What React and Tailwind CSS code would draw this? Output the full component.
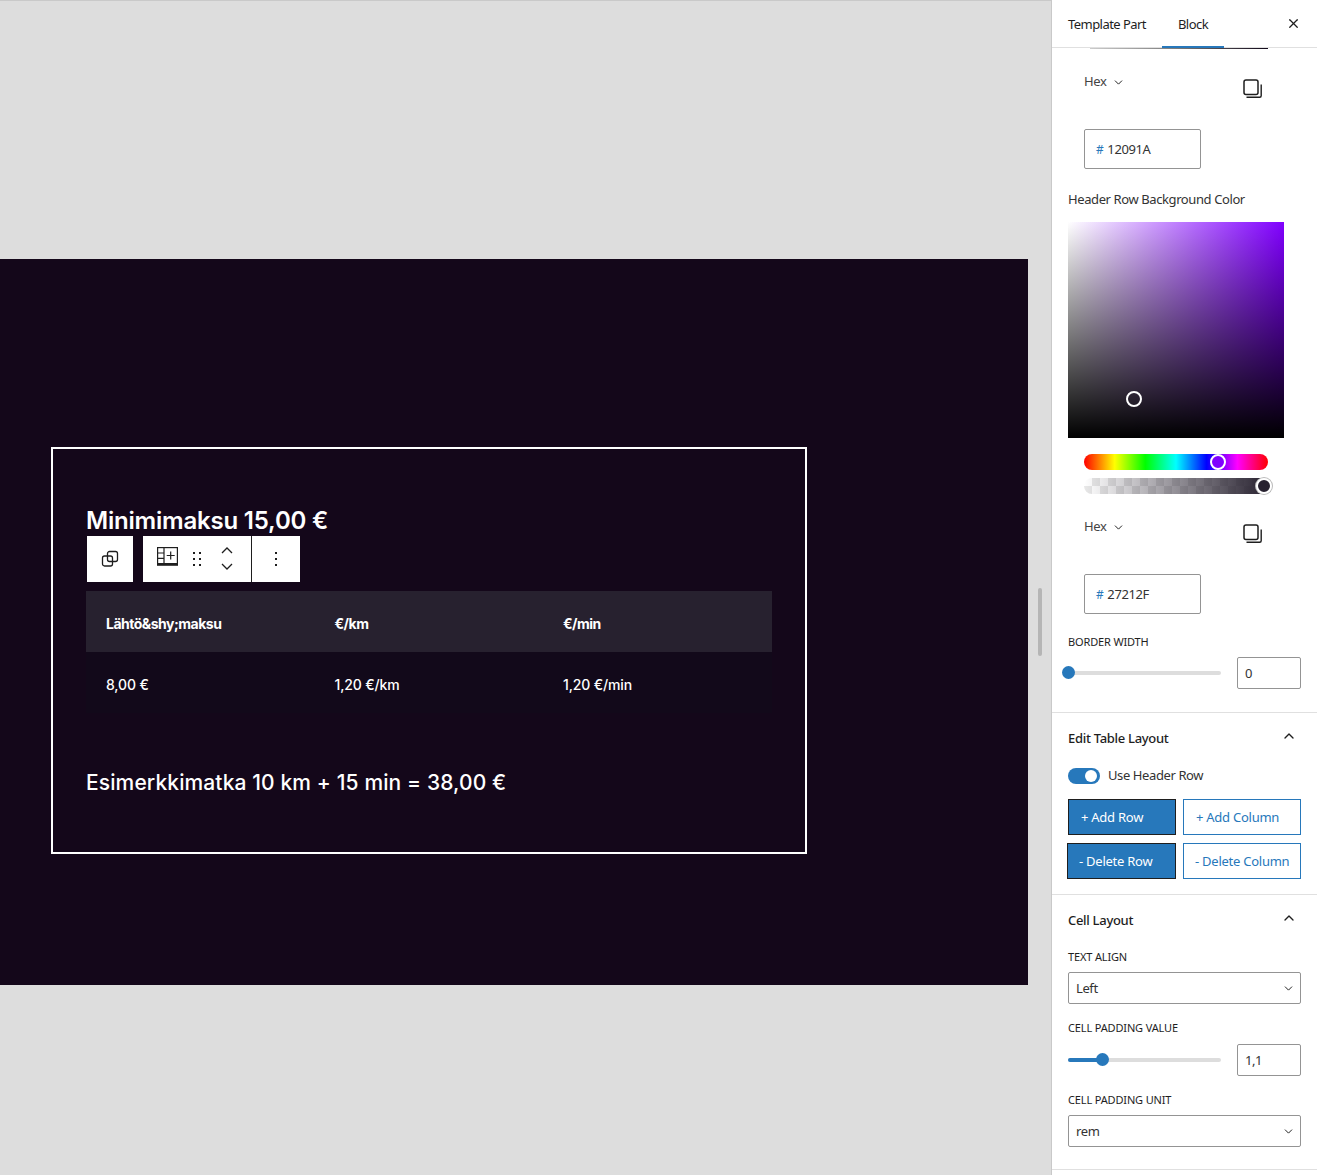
import { ChevronDown, ChevronUp, X } from "lucide-react";

const rows = [
  ["Lähtö&shy;maksu", "€/km", "€/min"],
  ["8,00 €", "1,20 €/km", "1,20 €/min"],
];

function CopyIcon() {
  return (
    <svg width="20" height="20" viewBox="0 0 20 20" fill="none" stroke="#1e1e1e" className="block">
      <rect x="1" y="1" width="14" height="14.5" rx="2" strokeWidth="1.5" />
      <path d="M3.5 18.2h13.2a1.5 1.5 0 0 0 1.5-1.5V5.5" strokeWidth="1.4" />
    </svg>
  );
}

function HexRow({ value, top, textPad }) {
  return (
    <div className={top}>
      <div className="flex justify-between pl-8 pr-[54px]">
        <div className="flex items-center gap-[6px] h-[20px] text-[13px] text-[#444]">
          Hex <ChevronDown size={13} strokeWidth={1.8} color="#1e1e1e" />
        </div>
        <div className="mt-[7px]">
          <CopyIcon />
        </div>
      </div>
      <div className={`ml-8 mt-[30px] w-[117px] h-[40px] border border-[#949494] rounded-[2px] flex items-center pl-[11px] text-[13px] text-[#333] ${textPad}`}>
        <span className="text-[#2778bb] text-[12px] mr-[4px]">#</span>
        {value}
      </div>
    </div>
  );
}

function Slider({ fill, thumb }) {
  return (
    <div className="flex items-center justify-between">
      <div className="relative w-[153px] h-[4px] rounded-full bg-[#ddd]">
        <div className={`h-full rounded-full bg-[#2778bb] ${fill}`} />
        <div className={`absolute top-[-5px] w-[13px] h-[13px] rounded-full bg-[#2778bb] ${thumb}`} />
      </div>
    </div>
  );
}

function NumberRow({ fill, thumb, value }) {
  return (
    <div className="flex items-center justify-between">
      <Slider fill={fill} thumb={thumb} />
      <div className="w-[64px] h-[32px] pt-[1px] border border-[#949494] rounded-[2px] flex items-center pl-[7px] text-[13px] text-[#333]">
        {value}
      </div>
    </div>
  );
}

function Label({ children, className = "" }) {
  return (
    <div className={`text-[11px] leading-[16px] uppercase tracking-[-0.15px] text-[#1e1e1e] ${className}`}>
      {children}
    </div>
  );
}

function SelectBox({ value }) {
  return (
    <div className="h-[32px] border border-[#949494] rounded-[2px] flex items-center justify-between pl-[7px] pr-[5px] text-[13px] text-[#333]">
      <span className="pt-[1px]">{value}</span>
      <ChevronDown size={13} strokeWidth={1.8} color="#1e1e1e" />
    </div>
  );
}

function SectionHead({ title, className = "" }) {
  return (
    <div className={`flex items-center justify-between pr-[4px] ${className}`}>
      <span className="text-[13px] font-medium leading-[20px] tracking-[-0.3px] text-[#1e1e1e]">{title}</span>
      <ChevronUp size={16} strokeWidth={2} color="#1e1e1e" className="mt-[-4px]" />
    </div>
  );
}

function BlockToolbar() {
  return (
    <div className="absolute left-[34px] top-[87px] flex gap-[10px] text-[#1e1e1e]">
      <div className="w-[46px] h-[46px] bg-white flex items-center justify-center">
        <svg width="18" height="18" viewBox="0 0 18 18" fill="none" stroke="#1e1e1e" strokeWidth="1.3">
          <rect x="1.5" y="6" width="10" height="10" rx="2" />
          <rect x="6.5" y="1.5" width="10" height="10" rx="2" />
        </svg>
      </div>
      <div className="h-[46px] bg-white flex">
        <div className="w-[109px] border-r border-[#1e1e1e] flex items-center pl-[14px]">
          <svg width="21" height="19" viewBox="0 0 21 19" fill="none" stroke="#1e1e1e" strokeWidth="1.2" className="mt-[-5px]">
            <rect x="0.6" y="0.6" width="19.8" height="16" />
            <path d="M7 .6v16M.6 6h6.4M.6 11.3h6.4M13.7 4.5v8M9.7 8.5h8" />
            <path d="M0 17.8h21" strokeWidth="2" />
          </svg>
          <svg width="8" height="14" viewBox="0 0 8 14" fill="#1e1e1e" className="ml-[15px] mt-[-1px]">
            <rect x="0" y="0" width="2" height="2" />
            <rect x="6" y="0" width="2" height="2" />
            <rect x="0" y="6" width="2" height="2" />
            <rect x="6" y="6" width="2" height="2" />
            <rect x="0" y="12" width="2" height="2" />
            <rect x="6" y="12" width="2" height="2" />
          </svg>
          <div className="flex flex-col gap-[9px] ml-[20px] mt-[-1px]">
            <svg width="12" height="7" viewBox="0 0 12 7" fill="none" stroke="#1e1e1e" strokeWidth="1.3">
              <path d="M1 6l5-5 5 5" />
            </svg>
            <svg width="12" height="7" viewBox="0 0 12 7" fill="none" stroke="#1e1e1e" strokeWidth="1.3">
              <path d="M1 1l5 5 5-5" />
            </svg>
          </div>
        </div>
        <div className="w-[48px] flex items-center justify-center">
          <svg width="4" height="14" viewBox="0 0 4 14" fill="#1e1e1e">
            <rect x="1" y="0" width="2" height="2" />
            <rect x="1" y="6" width="2" height="2" />
            <rect x="1" y="12" width="2" height="2" />
          </svg>
        </div>
      </div>
    </div>
  );
}

function Canvas() {
  return (
    <main className="flex-1 bg-[#ddd] border-t border-[#c9c9c9] pt-[258px] flex font-['Inter',sans-serif]">
      <div className="w-[1028px] h-[726px] bg-[#14071a] pt-[188px] pl-[51px] shrink-0">
        <div className="relative w-[756px] h-[407px] border-2 border-white pl-[33px] pt-[56px] text-white">
          <h2 className="text-[24px] leading-[32px] font-semibold tracking-[-0.2px]">Minimimaksu 15,00 €</h2>
          <BlockToolbar />
          <div className="mt-[54px] w-[686px]">
            {rows.map((row, i) => (
              <div
                key={i}
                className={`grid grid-cols-[228.5px_228.5px_1fr] h-[61px] items-center pl-[20px] pt-[4px] text-[14px] ${
                  i === 0 ? "bg-[#27212f] font-bold tracking-[-0.5px]" : "bg-[#12091a] font-medium tracking-[-0.15px]"
                }`}
              >
                {row.map((c) => (
                  <span key={c}>{c}</span>
                ))}
              </div>
            ))}
          </div>
          <p className="mt-[54px] text-[21px] leading-[32px] font-medium tracking-[0.12px]">
            Esimerkkimatka 10 km + 15 min = 38,00 €
          </p>
        </div>
      </div>
      <div className="ml-[10px] mt-[329px] w-[4px] h-[68px] rounded-full bg-[#b5b5b5]" />
    </main>
  );
}

function Sidebar() {
  return (
    <aside className="w-[266px] shrink-0 h-[1175px] border-l border-[#c9c9c9] bg-white font-['Noto_Sans',sans-serif] tracking-[-0.4px] overflow-hidden">
      <div className="h-[48px] pt-[1px] border-b border-[#e0e0e0] flex items-center relative text-[13px] tracking-[-0.55px] text-[#1e1e1e]">
        <span className="ml-4 mt-[1px]">Template Part</span>
        <span className="ml-[32px] mt-[1px]">Block</span>
        <div className="absolute left-[110px] bottom-[-1px] w-[62px] h-[2px] bg-[#2778bb]" />
        <X size={15} strokeWidth={2} color="#1e1e1e" className="absolute right-[16px] top-[16px]" />
      </div>
      <div className="h-[1px] ml-[38px] mr-[49px] bg-linear-to-r/srgb from-[#ccc] via-[#777] to-[#12091a]" />

      <HexRow value="12091A" top="mt-[23px]" textPad="pt-[2px]" />

      <div className="mt-[20px] px-4 text-[13px] leading-[20px] text-[#333]">Header Row Background Color</div>

      <div className="mt-[13px] ml-4 relative w-[216px] h-[216px] bg-linear-to-r/srgb from-white to-[#8000ff]">
        <div className="w-full h-full bg-linear-to-b/srgb from-[#00000000] to-black" />
        <div className="absolute left-[58px] top-[169px] w-[16px] h-[16px] rounded-full border-2 border-white" />
      </div>

      <div className="mt-[16px] ml-8 relative w-[184px] h-[16px] rounded-full bg-[linear-gradient(to_right,#f00,#ff0,#0f0,#0ff,#00f,#f0f,#f00)]">
        <div className="absolute left-[126px] top-0 w-[16px] h-[16px] rounded-full bg-[#8000ff] border-2 border-white" />
      </div>
      <div className="mt-[8px] ml-8 relative w-[184px] h-[16px] rounded-full bg-[repeating-conic-gradient(#e8e8e8_0_25%,#fff_0_50%)] bg-size-[16px_16px]">
        <div className="w-full h-full rounded-full bg-linear-to-r/srgb from-[#27212f00] to-[#27212f]" />
        <div className="absolute left-[172px] top-0 w-[16px] h-[16px] rounded-full bg-[#27212f] border-2 border-white shadow-[0_0_0_1px_#bbb]" />
      </div>

      <HexRow value="27212F" top="mt-[23px]" textPad="pt-[1px]" />

      <div className="px-4 mt-[20px]">
        <Label>Border Width</Label>
        <div className="mt-[7px]">
          <NumberRow fill="w-0" thumb="left-[-6px]" value="0" />
        </div>
      </div>

      <div className="mt-[23px] border-t border-[#e0e0e0] px-4 pt-[15px] h-[182px]">
        <SectionHead title="Edit Table Layout" />
        <div className="mt-[20px] flex items-center gap-2 h-[16px]">
          <div className="w-[32px] h-[16px] rounded-full bg-[#2778bb] relative">
            <div className="absolute right-[3px] top-[2px] w-[12px] h-[12px] rounded-full bg-white" />
          </div>
          <span className="text-[13px] text-[#333]">Use Header Row</span>
        </div>
        <div className="mt-[15px] grid grid-cols-[108px_118px] gap-x-[7px] gap-y-[8px] text-[13px] tracking-[-0.25px]">
          <div className="h-[36px] pt-[2px] bg-[#2778bb] border border-[#1e1e1e] text-white flex items-center pl-[12px]">+ Add Row</div>
          <div className="h-[36px] pt-[2px] border border-[#2778bb] text-[#2778bb] flex items-center pl-[12px]">+ Add Column</div>
          <div className="h-[36px] pt-[2px] ml-[-1px] bg-[#2778bb] border border-[#1e1e1e] text-white flex items-center pl-[11px]">- Delete Row</div>
          <div className="h-[36px] pt-[2px] border border-[#2778bb] text-[#2778bb] flex items-center pl-[11px]">- Delete Column</div>
        </div>
      </div>

      <div className="border-t border-[#e0e0e0] px-4 pt-[15px] h-[275px]">
        <SectionHead title="Cell Layout" />
        <Label className="mt-[19px]">Text Align</Label>
        <div className="mt-[7px]">
          <SelectBox value="Left" />
        </div>
        <Label className="mt-[16px]">Cell Padding Value</Label>
        <div className="mt-[8px]">
          <NumberRow fill="w-[34px]" thumb="left-[28px]" value="1,1" />
        </div>
        <Label className="mt-[16px]">Cell Padding Unit</Label>
        <div className="mt-[7px]">
          <SelectBox value="rem" />
        </div>
      </div>
      <div className="border-t border-[#e0e0e0]" />
    </aside>
  );
}

export default function App() {
  return (
    <div className="flex w-[1317px] h-[1175px] overflow-hidden">
      <Canvas />
      <Sidebar />
    </div>
  );
}
